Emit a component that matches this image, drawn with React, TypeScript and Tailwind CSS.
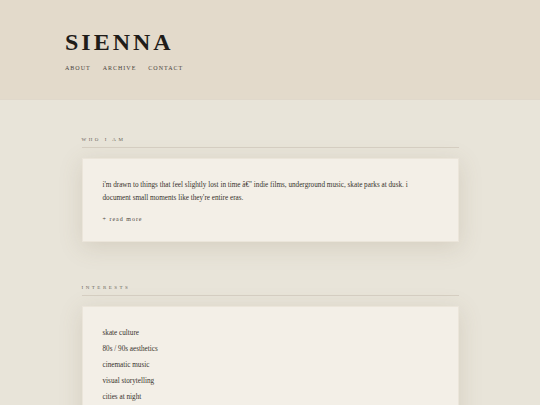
const interests = [
  "skate culture",
  "80s / 90s aesthetics",
  "cinematic music",
  "visual storytelling",
  "cities at night",
];

const SectionLabel = ({ children }: { children: string }) => (
  <div className="border-b border-[#d6cfc3] pb-[3px] mb-[10px]">
    <h2 className="text-[5px] leading-[8px] tracking-[2.5px] uppercase text-[#6b645b]">{children}</h2>
  </div>
);

const App = () => {
  return (
    <div
      className="min-h-screen bg-[#e8e4d9] text-[#37322c]"
      style={{ fontFamily: '"Liberation Serif", "DejaVu Serif", serif' }}
    >
      <header className="bg-[#e3dacb] h-[100px] border-b border-[#e0d8cb]">
        <div className="w-[410px] mx-auto pt-[30px]">
          <h1 className="text-[24px] leading-[24px] font-bold tracking-[3px] text-[#1f1c19]">SIENNA</h1>
          <nav className="flex gap-x-[12px] mt-[10px] text-[6px] leading-[8px] tracking-[1px] uppercase text-[#4a443d]">
            <a href="#">About</a>
            <a href="#">Archive</a>
            <a href="#">Contact</a>
          </nav>
        </div>
      </header>

      <main className="w-[377px] mx-auto pt-[36px] pb-10">
        <section className="mb-[42px]">
          <SectionLabel>Who I am</SectionLabel>
          <div className="bg-[#f3efe7] border border-[#ebe5da] shadow-[0_5px_22px_rgba(120,100,70,0.17)] px-5 pt-[20px] pb-[17px]">
            <p className="text-[7.2px] leading-[12.5px]">
              i'm drawn to things that feel slightly lost in time â€" indie films, underground music, skate parks at dusk. i document small moments like they're entire eras.
            </p>
            <div className="mt-[10px] text-[6px] leading-[10px] tracking-[1px] text-[#4a443d]">+ read more</div>
          </div>
        </section>

        <section>
          <SectionLabel>Interests</SectionLabel>
          <div className="bg-[#f3efe7] border border-[#ebe5da] shadow-[0_5px_22px_rgba(120,100,70,0.17)] px-5 pt-[21px] pb-[20px]">
            <ul className="flex flex-col gap-y-[6px] text-[7.2px] leading-[10px]">
              {interests.map((item) => (
                <li key={item}>{item}</li>
              ))}
            </ul>
          </div>
        </section>
      </main>
    </div>
  );
};

export default App;
